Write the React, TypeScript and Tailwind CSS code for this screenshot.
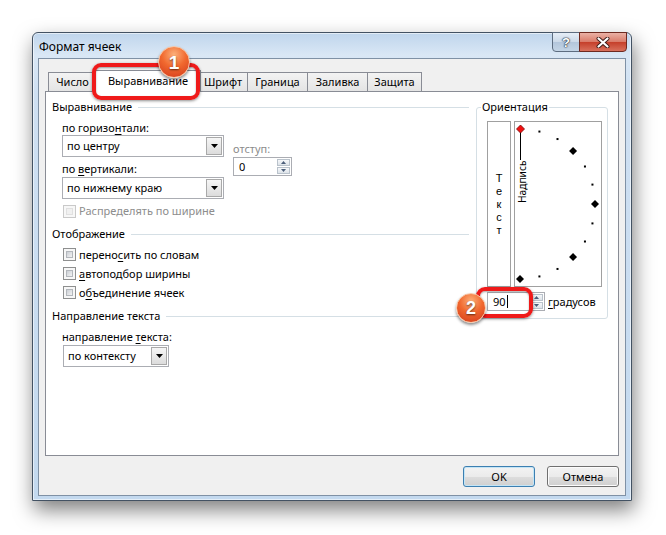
import React from "react";

const U = ({ c }: { c: string }) => (
  <span className="underline underline-offset-[2px] decoration-1">{c}</span>
);

function Tri() {
  return (
    <svg width="7" height="4" viewBox="0 0 7 4">
      <path d="M0 0H7L3.5 4Z" fill="#000" />
    </svg>
  );
}

function Combo({ text, w }: { text: string; w: string }) {
  return (
    <div className={`${w} h-[22px] border border-[#abadb3] bg-white flex items-center`}>
      <span className="flex-1 pl-[4px] leading-[14px]">{text}</span>
      <div className="w-[16px] h-[18px] mr-[1px] border border-[#a9a9a9] bg-[linear-gradient(#f6f6f6,#dcdcdc)] flex items-center justify-center">
        <Tri />
      </div>
    </div>
  );
}

function Check({ disabled }: { disabled?: boolean }) {
  return (
    <div
      className={`w-[13px] h-[13px] border p-[2px] bg-[#f7f7f7] ${
        disabled ? "border-[#c9c9c9]" : "border-[#8e8f8f]"
      }`}
    >
      <div
        className={`w-full h-full border ${
          disabled
            ? "border-[#e0e0e0] bg-[#f0f0f0]"
            : "border-[#b3b7bc] bg-[linear-gradient(135deg,#cbcfd5,#f3f3f3)]"
        }`}
      />
    </div>
  );
}

function SpinBtn({ up }: { up?: boolean }) {
  return (
    <div className="flex-1 border border-[#b9c2cb] bg-[linear-gradient(#f6f8fa,#dde3e9)] flex items-center justify-center">
      <svg width="5" height="3" viewBox="0 0 5 3">
        <path d={up ? "M0 3L2.5 0L5 3Z" : "M0 0L2.5 3L5 0Z"} fill="#4b5e7a" />
      </svg>
    </div>
  );
}

function SpinBox({ value, w, caret }: { value: string; w: string; caret?: boolean }) {
  return (
    <div className={`${w} h-[19px] border border-[#abadb3] bg-white flex`}>
      <div className="flex-1 pl-[5px] flex items-center leading-[14px]">
        {value}
        {caret && <span className="w-px h-[13px] bg-black ml-[1px]" />}
      </div>
      <div className="w-[15px] flex flex-col p-px gap-px">
        <SpinBtn up />
        <SpinBtn />
      </div>
    </div>
  );
}

function GroupHead({ children }: { children: React.ReactNode }) {
  return (
    <div className="h-[14px] flex items-center">
      <span className="pr-[6px] leading-[14px]">{children}</span>
      <div className="flex-1 h-px bg-[#d5dfe5]" />
    </div>
  );
}

function Tab({ w, children }: { w: string; children: React.ReactNode }) {
  return (
    <div
      className={`${w} h-[19px] border-t border-r border-[#898c95] bg-[linear-gradient(#f3f3f3,#e4e4e4)] flex items-center justify-center leading-[14px]`}
    >
      {children}
    </div>
  );
}

function Dial() {
  const cx = 5;
  const cy = 82;
  const r = 75;
  const pts: { x: number; y: number; a: number }[] = [];
  for (let a = 75; a >= -90; a -= 15) {
    const rad = (a * Math.PI) / 180;
    pts.push({ x: cx + r * Math.cos(rad), y: cy - r * Math.sin(rad), a });
  }
  return (
    <svg width="86" height="164" viewBox="0 0 86 164">
      {pts.map((p) =>
        p.a % 45 === 0 ? (
          <polygon
            key={p.a}
            points={`${p.x},${p.y - 4} ${p.x + 4},${p.y} ${p.x},${p.y + 4} ${p.x - 4},${p.y}`}
            fill="#000"
          />
        ) : (
          <rect key={p.a} x={p.x - 1} y={p.y - 1} width="2" height="2" fill="#000" />
        )
      )}
      <rect x="5" y="10" width="1" height="28" fill="#000" />
      <polygon points="5.5,3 9.5,7 5.5,11 1.5,7" fill="#f01010" stroke="#7a0000" strokeWidth="0.8" />
      <text
        transform="translate(11,81) rotate(-90)"
        fontSize="10.2"
        fontFamily="'Noto Sans', sans-serif"
        fill="#000"
      >
        Надпись
      </text>
    </svg>
  );
}

export default function App() {
  return (
    <div className="relative w-[666px] h-[535px] bg-white overflow-hidden font-['Noto_Sans',sans-serif] text-[11px] text-black">
      {/* window */}
      <div className="absolute left-[32px] top-[32px] w-[600px] h-[469px] rounded-t-[6px] border border-[#435263] bg-[linear-gradient(180deg,#bfd5ec_0px,#d9e7f5_22px,#cfe0f2_60px,#c3d9ef_100%)] shadow-[inset_0_0_0_1px_rgba(255,255,255,0.55),2px_9px_20px_rgba(0,0,0,0.5)] flex flex-col">
        {/* title bar */}
        <div className="h-[25px] flex items-start">
          <div className="pl-[6px] pt-[6px] text-[12px] leading-[16px] text-black">Формат ячеек</div>
          <div className="ml-auto mr-[4px] -mt-px flex">
            <div className="w-[28px] h-[20px] rounded-bl-[4px] border border-[#5d6d80] bg-[linear-gradient(#e6eef7,#cbd9e8_50%,#b3c6db_51%,#c4d5e6)] flex items-center justify-center">
              <span className="text-white font-bold text-[13px] leading-none font-['Liberation_Sans',sans-serif] [text-shadow:0_0_1px_#243040,0_0_1px_#243040,0_0_2px_#243040]">
                ?
              </span>
            </div>
            <div className="w-[48px] h-[20px] -ml-px rounded-br-[4px] border border-[#6e2a20] bg-[linear-gradient(#eab1a5,#d97a68_50%,#c53f2a_51%,#d8705c)] flex items-center justify-center">
              <svg width="14" height="11" viewBox="0 0 14 11">
                <path d="M2.5 1.5L11.5 9.5M11.5 1.5L2.5 9.5" stroke="#3b1a16" strokeWidth="4" strokeLinecap="round" />
                <path d="M2.5 1.5L11.5 9.5M11.5 1.5L2.5 9.5" stroke="#fff" strokeWidth="2.2" strokeLinecap="round" />
              </svg>
            </div>
          </div>
        </div>
        {/* client */}
        <div className="mx-[5px] mb-[4px] flex-1 border border-[#7f91a5] bg-[#f0f0f0] flex flex-col">
          {/* tabs */}
          <div className="mt-[11px] h-[21px] pl-[9px] flex items-end">
            <div className="w-[49px] h-[19px] border-t border-l border-r border-[#898c95] bg-[linear-gradient(#f3f3f3,#e4e4e4)] flex items-center justify-center leading-[14px]">
              Число
            </div>
            <div className="relative z-10 -mx-[2px] w-[106px] h-[22px] -mb-px border border-b-0 border-[#898c95] bg-white flex items-center justify-center leading-[14px] pb-[2px]">
              Выравнивание
            </div>
            <Tab w="w-[49px]">Шрифт</Tab>
            <Tab w="w-[60px]">Граница</Tab>
            <Tab w="w-[60px]">Заливка</Tab>
            <Tab w="w-[54px]">Защита</Tab>
          </div>
          {/* panel */}
          <div className="mx-[6px] h-[365px] border border-[#898c95] bg-white flex items-start pt-[8px] pl-[6px]">
            {/* left column */}
            <div className="w-[417px] flex flex-col">
              <GroupHead>Выравнивание</GroupHead>
              <div className="mt-[7px] flex">
                <div className="ml-[10px] w-[162px] flex flex-col">
                  <div className="h-[14px] leading-[14px]">
                    по горизо<U c="н" />тали:
                  </div>
                  <Combo text="по центру" w="w-[162px]" />
                  <div className="mt-[5px] h-[14px] leading-[14px]">
                    по <U c="в" />ертикали:
                  </div>
                  <div className="mt-[1px]">
                    <Combo text="по нижнему краю" w="w-[162px]" />
                  </div>
                </div>
                <div className="ml-[9px] pt-[21px] flex flex-col">
                  <div className="h-[14px] leading-[14px] text-[#8b8b8b]">отступ:</div>
                  <div className="mt-[1px]">
                    <SpinBox value="0" w="w-[59px]" />
                  </div>
                </div>
              </div>
              <div className="mt-[5px] ml-[11px] h-[14px] flex items-center gap-[3px] text-[#8d8d8d]">
                <Check disabled />
                <span className="leading-[14px]">Распределять по ширине</span>
              </div>
              <div className="mt-[9px]">
                <GroupHead>Отображение</GroupHead>
              </div>
              <div className="mt-[4px] ml-[11px] flex flex-col">
                <div className="h-[19px] flex items-center gap-[3px]">
                  <Check />
                  <span className="leading-[14px]">
                    перено<U c="с" />ить по словам
                  </span>
                </div>
                <div className="h-[19px] flex items-center gap-[3px]">
                  <Check />
                  <span className="leading-[14px]">
                    <U c="а" />втоподбор ширины
                  </span>
                </div>
                <div className="h-[19px] flex items-center gap-[3px]">
                  <Check />
                  <span className="leading-[14px]">
                    о<U c="б" />ъединение ячеек
                  </span>
                </div>
              </div>
              <div className="mt-[7px]">
                <GroupHead>Направление текста</GroupHead>
              </div>
              <div className="mt-[7px] ml-[10px] h-[14px] leading-[14px]">
                направление <U c="т" />екста:
              </div>
              <div className="mt-[1px] ml-[11px]">
                <Combo text="по контексту" w="w-[106px]" />
              </div>
            </div>
            {/* right column */}
            <fieldset className="ml-[7px] w-[132px] h-[219px] border border-[#d5dfe5] rounded-[3px] pl-[10px]">
              <legend className="-ml-[6px] px-[1px] leading-[14px]">Ориентация</legend>
              <div className="mt-[7px] flex gap-[3px]">
                <div className="w-[24px] h-[166px] border border-[#a0a0a0] flex flex-col items-center justify-center font-['Liberation_Sans',sans-serif] text-[11px] leading-[13px]">
                  <span>Т</span>
                  <span>е</span>
                  <span>к</span>
                  <span>с</span>
                  <span>т</span>
                </div>
                <div className="w-[88px] h-[166px] border border-[#a0a0a0]">
                  <Dial />
                </div>
              </div>
              <div className="mt-[5px] flex items-center gap-[3px]">
                <SpinBox value="90" w="w-[58px]" caret />
                <span className="leading-[14px]">
                  <U c="г" />радусов
                </span>
              </div>
            </fieldset>
          </div>
          {/* buttons */}
          <div className="mt-[10px] pr-[6px] flex justify-end gap-[12px]">
            <div className="w-[72px] h-[21px] rounded-[3px] border border-[#3c7fb1] bg-[linear-gradient(#f3f3f3,#ebebeb_50%,#dddddd_51%,#cfcfcf)] shadow-[inset_0_0_0_1px_#c4e5f6] flex items-center justify-center leading-[14px]">
              OK
            </div>
            <div className="w-[72px] h-[21px] rounded-[3px] border border-[#707070] bg-[linear-gradient(#f3f3f3,#ebebeb_50%,#dddddd_51%,#cfcfcf)] shadow-[inset_0_0_0_1px_#fcfcfc] flex items-center justify-center leading-[14px]">
              Отмена
            </div>
          </div>
        </div>
      </div>

      {/* annotation 1 */}
      <div className="absolute left-[92px] top-[63px] w-[108px] h-[37px] rounded-[9px] border-[4px] border-[#ef1a1a] shadow-[0_1px_3px_rgba(0,0,0,0.45),inset_0_1px_2px_rgba(0,0,0,0.35)] z-20" />
      <div className="absolute left-[158px] top-[46px] w-[32px] h-[32px] rounded-full border border-[#f7c6a6] bg-[radial-gradient(circle_at_50%_25%,#fcb07a_0%,#f1692f_45%,#d2381a_100%)] shadow-[0_2px_3px_rgba(0,0,0,0.45)] flex items-center justify-center text-white font-bold text-[19px] leading-none font-['Liberation_Sans',sans-serif] [text-shadow:0_1px_2px_rgba(0,0,0,0.6)] z-30">
        1
      </div>
      {/* annotation 2 */}
      <div className="absolute left-[476px] top-[287px] w-[57px] h-[31px] rounded-[9px] border-[4px] border-[#ef1a1a] shadow-[0_1px_3px_rgba(0,0,0,0.45),inset_0_1px_2px_rgba(0,0,0,0.35)] z-20" />
      <div className="absolute left-[456px] top-[293px] w-[30px] h-[30px] rounded-full border border-[#f7c6a6] bg-[radial-gradient(circle_at_50%_25%,#fcb07a_0%,#f1692f_45%,#d2381a_100%)] shadow-[0_2px_3px_rgba(0,0,0,0.45)] flex items-center justify-center text-white font-bold text-[18px] leading-none font-['Liberation_Sans',sans-serif] [text-shadow:0_1px_2px_rgba(0,0,0,0.6)] z-30">
        2
      </div>
    </div>
  );
}
